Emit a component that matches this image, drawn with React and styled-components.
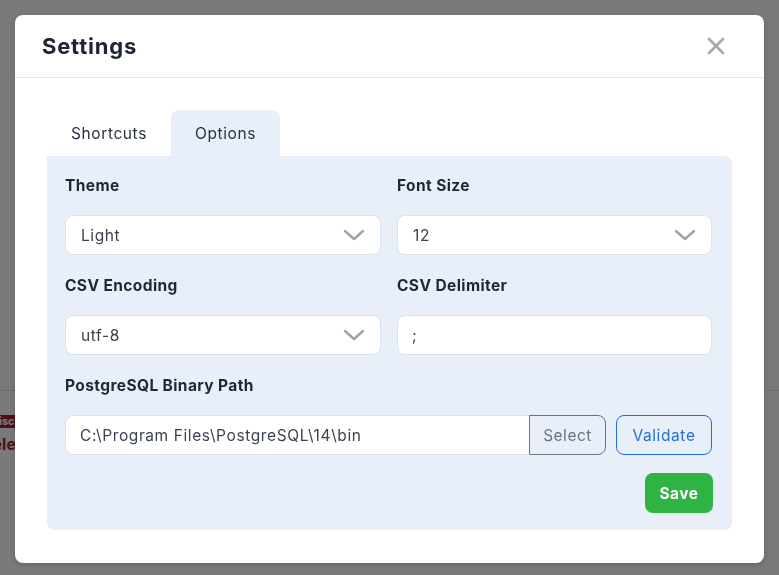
import { useState } from 'react'
import styled, { createGlobalStyle } from 'styled-components'

const GlobalStyle = createGlobalStyle`
	html, body {
		margin: 0;
		padding: 0;
		background: #ffffff;
		font-family: 'Inter', 'Noto Sans', sans-serif;
	}
`

function Chevron() {
	return (
		<svg width="22" height="12" viewBox="0 0 22 12" fill="none">
			<path d="M2 2 L11 10 L20 2" stroke="#9ca3af" strokeWidth="2.4" strokeLinecap="round" strokeLinejoin="round" />
		</svg>
	)
}

function Select({ value }) {
	return (
		<S.SelectBox>
			<span>{value}</span>
			<Chevron />
		</S.SelectBox>
	)
}

function App() {
	const [tab, setTab] = useState('options')

	return (
		<>
			<GlobalStyle />
			<S.Page>
				<S.BgHeader />
				<S.BgRow>
					<S.BgBadge>Discard</S.BgBadge>
					<S.BgDanger>Delete</S.BgDanger>
				</S.BgRow>
			</S.Page>
			<S.Overlay>
				<S.Modal>
					<S.Header>
						<S.Title>Settings</S.Title>
						<S.Close aria-label="close">
							<svg width="18" height="18" viewBox="0 0 18 18">
								<path d="M2 2 L16 16 M16 2 L2 16" stroke="#a3a7ae" strokeWidth="2.6" strokeLinecap="round" />
							</svg>
						</S.Close>
					</S.Header>
					<S.Body>
						<S.Tabs>
							<S.Tab active={tab === 'shortcuts'} onClick={() => setTab('shortcuts')}>
								Shortcuts
							</S.Tab>
							<S.Tab active={tab === 'options'} onClick={() => setTab('options')}>
								Options
							</S.Tab>
						</S.Tabs>
						<S.Panel>
							<S.Grid>
								<S.Field>
									<S.Label>Theme</S.Label>
									<Select value="Light" />
								</S.Field>
								<S.Field>
									<S.Label>Font Size</S.Label>
									<Select value="12" />
								</S.Field>
								<S.Field>
									<S.Label>CSV Encoding</S.Label>
									<Select value="utf-8" />
								</S.Field>
								<S.Field>
									<S.Label>CSV Delimiter</S.Label>
									<S.Input defaultValue=";" />
								</S.Field>
								<S.Field wide>
									<S.Label>PostgreSQL Binary Path</S.Label>
									<S.PathRow>
										<S.PathGroup>
											<S.PathInput defaultValue="C:\Program Files\PostgreSQL\14\bin" />
											<S.SelectButton>Select</S.SelectButton>
										</S.PathGroup>
										<S.ValidateButton>Validate</S.ValidateButton>
									</S.PathRow>
								</S.Field>
							</S.Grid>
							<S.Footer>
								<S.SaveButton>Save</S.SaveButton>
							</S.Footer>
						</S.Panel>
					</S.Body>
				</S.Modal>
			</S.Overlay>
		</>
	)
}
export default App

const Page = styled.div`
	width: 779px;
	height: 575px;
	background: #ffffff;
	overflow: hidden;
`

const BgHeader = styled.div`
	height: 390px;
	background: #fdfdfd;
	border-bottom: 1px solid #e5e5e5;
`

const BgRow = styled.div`
	display: flex;
	flex-direction: column;
	align-items: flex-start;
	gap: 6px;
	padding-top: 24px;
	font-family: 'Inter', sans-serif;
	font-weight: 700;
`

const BgBadge = styled.span`
	background: #a3202f;
	color: #ffffff;
	font-size: 11px;
	padding: 0 3px 0 0;
	line-height: 13px;
	margin-left: -9px;
`

const BgDanger = styled.span`
	color: #b0202e;
	font-size: 16px;
	margin-left: -19px;
`

const Overlay = styled.div`
	position: fixed;
	inset: 0;
	background: rgba(0, 0, 0, 0.52);
	display: flex;
	align-items: flex-start;
	justify-content: center;
	padding-top: 15px;
`

const Modal = styled.div`
	width: 749px;
	height: 548px;
	background: #ffffff;
	border-radius: 8px;
	box-shadow: 0 2px 6px rgba(0, 0, 0, 0.2);
	display: flex;
	flex-direction: column;
`

const Header = styled.div`
	height: 62px;
	display: flex;
	align-items: center;
	justify-content: space-between;
	padding: 0 39px 0 27px;
	border-bottom: 1px solid #e5e7eb;
`

const Title = styled.h2`
	margin: 0;
	font-size: 22px;
	font-weight: 700;
	color: #1e2433;
	letter-spacing: 0.8px;
`

const Close = styled.button`
	border: none;
	background: none;
	padding: 0;
	display: flex;
	cursor: pointer;
`

const Body = styled.div`
	padding: 32px 32px 0 32px;
`

const Tabs = styled.div`
	display: flex;
`

const Tab = styled.button`
	height: 46px;
	padding: 0 24px;
	border: none;
	border-radius: 8px 8px 0 0;
	background: ${({ active }) => (active ? '#e8eff8' : 'transparent')};
	font-family: inherit;
	font-size: 15.5px;
	letter-spacing: 0.6px;
	color: #2a3140;
	cursor: pointer;
`

const Panel = styled.div`
	background: #e8eff8;
	border-radius: 0 8px 8px 8px;
	padding: 19px 19px 17px 18px;
`

const Grid = styled.div`
	display: grid;
	grid-template-columns: 316px 315px;
	column-gap: 16px;
	row-gap: 20px;
`

const Field = styled.div`
	display: flex;
	flex-direction: column;
	gap: 18px;
	grid-column: ${({ wide }) => (wide ? '1 / -1' : 'auto')};
`

const Label = styled.div`
	font-size: 15.5px;
	line-height: 22px;
	font-weight: 700;
	letter-spacing: 0.4px;
	color: #1f2636;
`

const SelectBox = styled.div`
	box-sizing: border-box;
	height: 40px;
	display: flex;
	align-items: center;
	justify-content: space-between;
	padding: 0 15px;
	background: #ffffff;
	border: 1px solid #dde3ea;
	border-radius: 8px;
	font-size: 15.5px;
	letter-spacing: 0.6px;
	color: #3b4250;
`

const Input = styled.input`
	box-sizing: border-box;
	height: 40px;
	width: 100%;
	padding: 0 14px;
	background: #ffffff;
	border: 1px solid #dde3ea;
	border-radius: 8px;
	font-family: inherit;
	font-size: 15.5px;
	letter-spacing: 0.6px;
	color: #3b4250;
	outline: none;
`

const PathRow = styled.div`
	display: flex;
	gap: 10px;
`

const PathGroup = styled.div`
	display: flex;
	flex: 1;
`

const PathInput = styled(Input)`
	flex: 1;
	border-radius: 8px 0 0 8px;
	border-right: none;
`

const SelectButton = styled.button`
	box-sizing: border-box;
	width: 77px;
	height: 40px;
	border: 1px solid #6b7280;
	border-radius: 0 8px 8px 0;
	background: transparent;
	font-family: inherit;
	font-size: 15.5px;
	letter-spacing: 0.5px;
	color: #6b7280;
`

const ValidateButton = styled.button`
	box-sizing: border-box;
	width: 96px;
	height: 40px;
	border: 1px solid #2a6fd0;
	border-radius: 8px;
	background: transparent;
	font-family: inherit;
	font-size: 15.5px;
	letter-spacing: 0.6px;
	color: #2a6fd0;
`

const Footer = styled.div`
	display: flex;
	justify-content: flex-end;
	margin-top: 18px;
`

const SaveButton = styled.button`
	width: 68px;
	height: 40px;
	border: none;
	border-radius: 8px;
	background: #2fb344;
	color: #ffffff;
	font-family: inherit;
	font-size: 15.5px;
	letter-spacing: 0.5px;
	font-weight: 700;
`

const S = {
	Page,
	BgHeader,
	BgRow,
	BgBadge,
	BgDanger,
	Overlay,
	Modal,
	Header,
	Title,
	Close,
	Body,
	Tabs,
	Tab,
	Panel,
	Grid,
	Field,
	Label,
	SelectBox,
	Input,
	PathRow,
	PathGroup,
	PathInput,
	SelectButton,
	ValidateButton,
	Footer,
	SaveButton,
}
